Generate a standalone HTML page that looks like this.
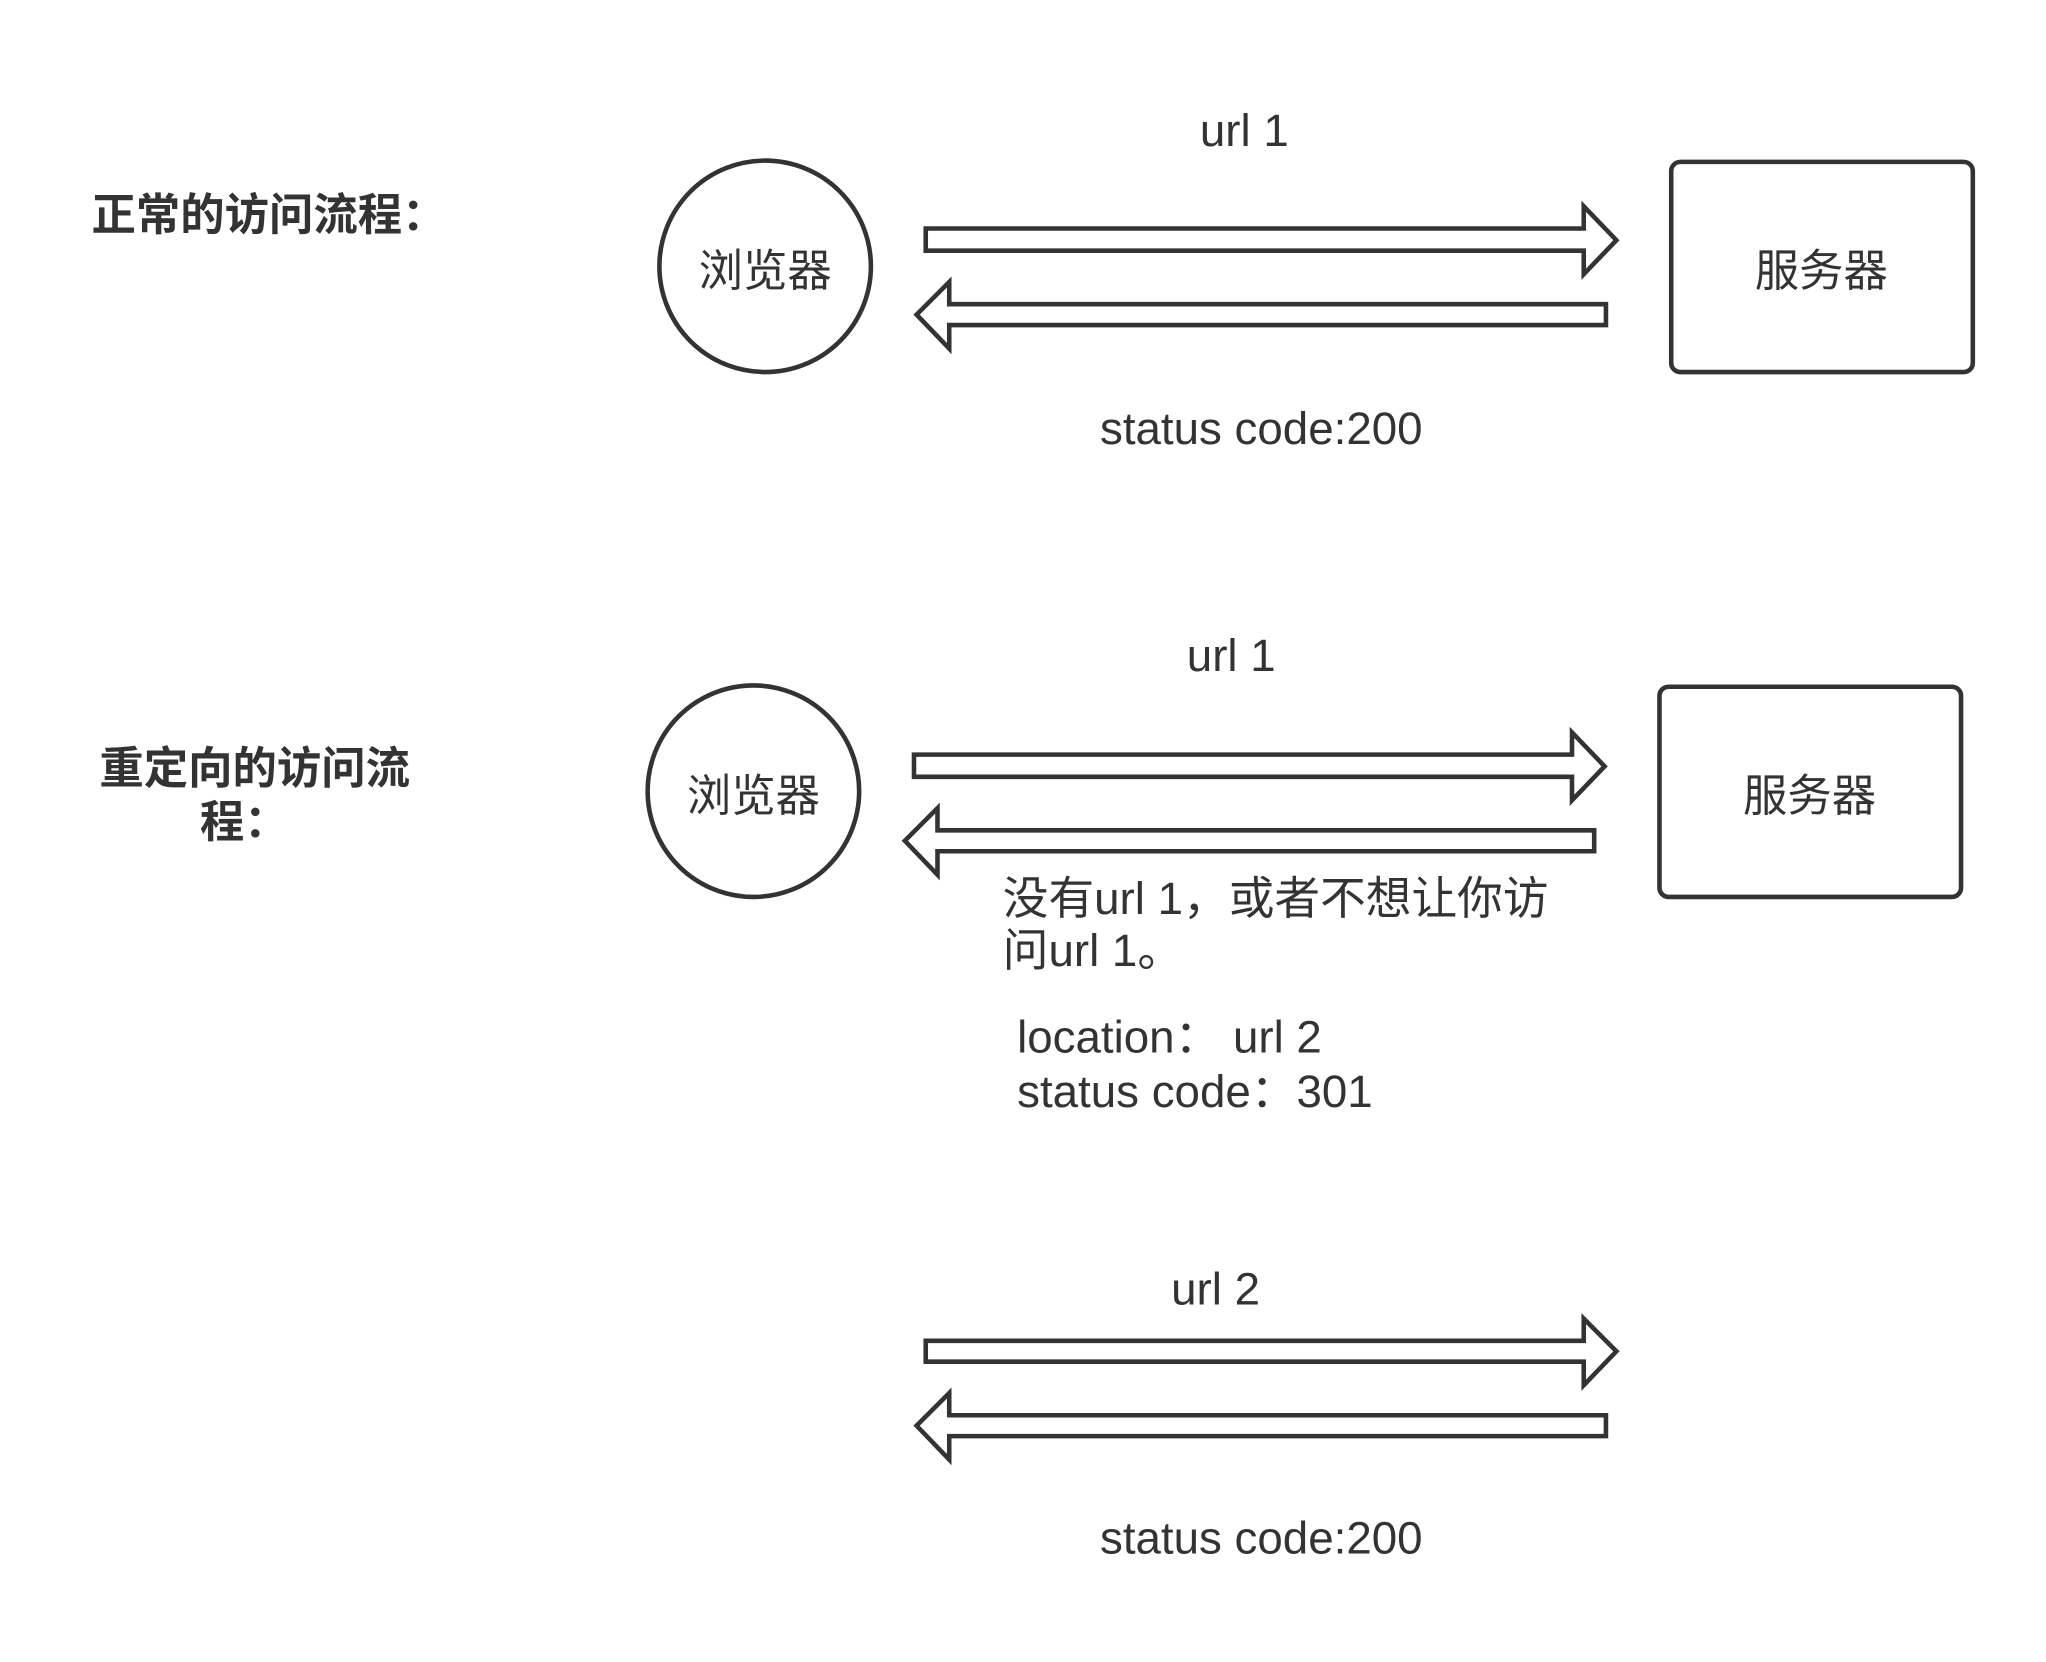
<!DOCTYPE html>
<html><head><meta charset="utf-8"><style>
html,body{margin:0;padding:0;background:#fff;}
svg{display:block;}
text{font-family:"Liberation Sans","Noto Sans CJK SC",sans-serif;fill:#333;}
</style></head><body>
<svg width="2046" height="1662" viewBox="0 0 1567 1273" xmlns="http://www.w3.org/2000/svg">
<g fill="#fff" stroke="#333" stroke-width="3.5" stroke-linejoin="miter">
<circle cx="586" cy="204" r="81"/>
<rect x="1280" y="124" width="231" height="161" rx="7"/>
<path d="M709,175 L1213,175 L1213,158 L1238,184 L1213,210 L1213,192 L709,192 Z"/>
<path d="M1230,233 L727,233 L727,216 L702,241 L727,267 L727,249 L1230,249 Z"/>

<circle cx="577" cy="606" r="81"/>
<rect x="1271" y="526" width="231" height="161" rx="7"/>
<path d="M700,578 L1204,578 L1204,561 L1229,587 L1204,613 L1204,595 L700,595 Z"/>
<path d="M1221,636 L718,636 L718,619 L693,644 L718,670 L718,652 L1221,652 Z"/>

<path d="M709,1027 L1213,1027 L1213,1010 L1238,1035 L1213,1061 L1213,1043 L709,1043 Z"/>
<path d="M1230,1084 L727,1084 L727,1067 L702,1092 L727,1118 L727,1100 L1230,1100 Z"/>
</g>
<g font-size="35">
<text x="70" y="176" font-size="34" font-weight="bold">正常的访问流程：</text>
<text x="586" y="219" font-size="34" text-anchor="middle">浏览器</text>
<text x="1395" y="219" font-size="34" text-anchor="middle">服务器</text>
<text x="953" y="112" text-anchor="middle">url 1</text>
<text x="966" y="340" text-anchor="middle">status code:200</text>

<text x="195" y="600" font-size="34" font-weight="bold" text-anchor="middle">重定向的访问流</text>
<text x="187" y="641" font-size="34" font-weight="bold" text-anchor="middle">程：</text>
<text x="577" y="621" font-size="34" text-anchor="middle">浏览器</text>
<text x="1386" y="621" font-size="34" text-anchor="middle">服务器</text>
<text x="943" y="514" text-anchor="middle">url 1</text>
<text x="768" y="700">没有url 1，或者不想让你访</text>
<text x="768" y="740">问url 1。</text>
<text x="779" y="806">location：  url 2</text>
<text x="779" y="848">status code：301</text>

<text x="931" y="999" text-anchor="middle">url 2</text>
<text x="966" y="1190" text-anchor="middle">status code:200</text>
</g>
</svg>
</body></html>
